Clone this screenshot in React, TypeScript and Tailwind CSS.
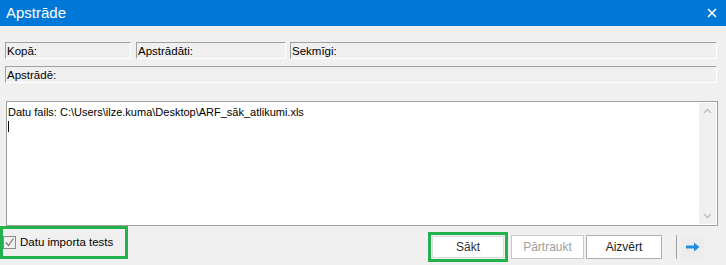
import React from 'react';

const font = { fontFamily: '"Liberation Sans", Arial, sans-serif' };

function Field({ label, className }: { label: string; className: string }) {
    return (
        <div className={`h-[17px] border-t border-l border-t-[#a0a0a0] border-l-[#a0a0a0] border-b border-r border-b-white border-r-white flex items-end pl-[1px] text-[11.5px] leading-[14px] text-black ${className}`}>
            {label}
        </div>
    );
}

export default function App() {
    return (
        <div className="w-[726px] h-[265px] bg-[#f0f0f0] flex flex-col overflow-hidden" style={font}>
            {/* Title bar */}
            <div className="h-[26px] bg-[#0078d7] flex items-center justify-between pl-[6px] pr-[9px] shrink-0">
                <span className="text-white text-[15px]">Apstrāde</span>
                <svg width="10" height="10" viewBox="0 0 10 10" className="text-white">
                    <path d="M1 1 L9 9 M9 1 L1 9" stroke="currentColor" strokeWidth="1.6" />
                </svg>
            </div>

            <div className="pl-[5px] pr-[9px] pt-[16px]">
                <div className="flex">
                    <Field label="Kopā:" className="w-[126px]" />
                    <Field label="Apstrādāti:" className="w-[150px] ml-[5px]" />
                    <Field label="Sekmīgi:" className="flex-1 ml-[4px]" />
                </div>
                <Field label="Apstrādē:" className="mt-[7px]" />

                {/* Log box */}
                <div className="mt-[18px] ml-[1px] mr-[-1px] h-[125px] border border-[#a0a0a0] bg-white flex">
                    <div className="flex-1 pl-[1px] pt-[4px] text-[11px] leading-[13px] text-black">
                        <div>Datu fails: C:\Users\ilze.kuma\Desktop\ARF_sāk_atlikumi.xls</div>
                        <div className="w-[1px] h-[11px] bg-black mt-[2px]" />
                    </div>
                    <div className="w-[17px] my-[1px] mr-[1px] bg-[#f0f0f0] flex flex-col items-center justify-between py-[5px]">
                        <svg width="9" height="6" viewBox="0 0 9 6">
                            <path d="M1 5 L4.5 1.5 L8 5" stroke="#c4c4c4" strokeWidth="1.6" fill="none" />
                        </svg>
                        <svg width="9" height="6" viewBox="0 0 9 6">
                            <path d="M1 1 L4.5 4.5 L8 1" stroke="#c4c4c4" strokeWidth="1.6" fill="none" />
                        </svg>
                    </div>
                </div>
            </div>

            {/* Bottom row */}
            <div className="flex items-start">
                <div className="w-[128px] h-[33px] border-[3px] border-[#22b14c] flex items-center gap-[4px]">
                    <div className="w-[13px] h-[13px] border border-[#8a8a8a] bg-[#f0f0f0] flex items-center justify-center">
                        <svg width="11" height="11" viewBox="0 0 11 11">
                            <path d="M2 5.5 L4.5 8.5 L9.5 1.5" stroke="#7a7a7a" strokeWidth="1.2" fill="none" />
                        </svg>
                    </div>
                    <span className="text-[11.5px] text-black">Datu importa tests</span>
                </div>

                <div className="ml-[300px] mt-[6px] w-[80px] h-[30px] border-[3px] border-[#22b14c] p-[1px]">
                    <div className="w-full h-full bg-white border border-[#dadada] flex items-center justify-center text-[12px] text-[#333]">
                        Sākt
                    </div>
                </div>
                <button className="ml-[3px] mt-[9px] w-[73px] h-[24px] bg-white border border-[#c8c8c8] flex items-center justify-center text-[12px] text-[#a0a0a0]">
                    Pārtraukt
                </button>
                <button className="ml-[2px] mt-[9px] w-[76px] h-[24px] bg-white border border-[#adadad] flex items-center justify-center text-[12px] text-[#222]">
                    Aizvērt
                </button>
                <div className="ml-[14px] mt-[9px] w-[1px] h-[24px] bg-[#a0a0a0]" />
                <div className="ml-[4px] mt-[9px] w-[23px] h-[24px] bg-[#ececec] flex items-center justify-center">
                    <svg width="14" height="10" viewBox="0 0 14 10">
                        <path d="M0 3.5 H8 V0.5 L13.5 5 L8 9.5 V6.5 H0 Z" fill="#1e8fe0" />
                    </svg>
                </div>
            </div>
        </div>
    );
}
